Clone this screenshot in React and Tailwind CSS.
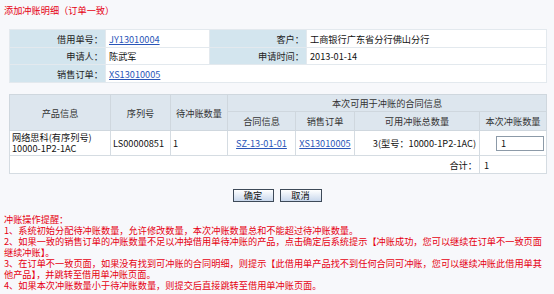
import React from "react";

const link = "text-[#2a56b8] underline";

export default function App() {
  const lb = "bg-[#d3e5ee] text-right pr-[2px] border border-[#e3e9ee] text-[#222]";
  const vl = "bg-white pl-[3px] border border-[#e3e9ee] text-[#111]";
  const th = "bg-[#dde6ee] text-center border border-[#cfd7de] text-[#333] font-normal";
  const td = "bg-white border border-[#d5dce2] text-[#111]";
  return (
    <div className="w-[554px] h-[294px] overflow-hidden bg-[#f7f8fb] font-['Noto_Sans_CJK_SC',sans-serif] text-[9.2px] leading-[12px]">
      <div className="pt-[4px] pl-[4px] text-[#e60012] leading-[13px]">添加冲账明细（订单一致）</div>

      <table className="ml-[9px] mt-[12px] w-[537px] border-collapse table-fixed">
        <colgroup>
          <col className="w-[96px]" />
          <col className="w-[104px]" />
          <col className="w-[97px]" />
          <col className="w-[240px]" />
        </colgroup>
        <tbody>
          <tr className="h-[18px]">
            <td className={lb}>借用单号：</td>
            <td className={vl}><span className={link}>JY13010004</span></td>
            <td className={lb}>客户：</td>
            <td className={vl}>工商银行广东省分行佛山分行</td>
          </tr>
          <tr className="h-[17px]">
            <td className={lb}>申请人：</td>
            <td className={vl}>陈武军</td>
            <td className={lb}>申请时间：</td>
            <td className={vl}>2013-01-14</td>
          </tr>
          <tr className="h-[18px]">
            <td className={lb}>销售订单：</td>
            <td className={vl} colSpan={3}><span className={link}>XS13010005</span></td>
          </tr>
        </tbody>
      </table>

      <table className="ml-[9px] mt-[11px] w-[537px] border-collapse table-fixed">
        <colgroup>
          <col className="w-[101px]" />
          <col className="w-[60px]" />
          <col className="w-[57px]" />
          <col className="w-[68px]" />
          <col className="w-[59px]" />
          <col className="w-[125px]" />
          <col className="w-[67px]" />
        </colgroup>
        <thead>
          <tr className="h-[17px]">
            <th className={th} rowSpan={2}>产品信息</th>
            <th className={th} rowSpan={2}>序列号</th>
            <th className={th} rowSpan={2}>待冲账数量</th>
            <th className={th} colSpan={4}>本次可用于冲账的合同信息</th>
          </tr>
          <tr className="h-[19px]">
            <th className={th}>合同信息</th>
            <th className={th}>销售订单</th>
            <th className={th}>可用冲账总数量</th>
            <th className={th}>本次冲账数量</th>
          </tr>
        </thead>
        <tbody>
          <tr className="h-[25px]">
            <td className={td + " pl-[2px] leading-[11px]"}>
              <div>网络思科(有序列号)</div>
              <div>10000-1P2-1AC</div>
            </td>
            <td className={td + " pl-[2px]"}>LS00000851</td>
            <td className={td + " pl-[2px]"}>1</td>
            <td className={td + " text-center"}><span className={link}>SZ-13-01-01</span></td>
            <td className={td + " text-center"}><span className={link}>XS13010005</span></td>
            <td className={td + " text-right pr-[3px]"}>3(型号：10000-1P2-1AC)</td>
            <td className={td}>
              <div className="flex justify-end pr-[2px]">
                <div className="w-[48px] h-[15px] bg-white border border-[#8c9aa8] pl-[4px] leading-[13px]">1</div>
              </div>
            </td>
          </tr>
          <tr className="h-[18px]">
            <td className={td + " text-right pr-[2px] border-r-[#d5dce2]"} colSpan={6}>合计：</td>
            <td className={td + " pl-[4px]"}>1</td>
          </tr>
        </tbody>
      </table>

      <div className="mt-[15px] flex justify-center gap-[6px]">
        <button className="w-[41px] h-[13px] border border-[#3e4a58] bg-gradient-to-b from-white to-[#c9d8ec] text-[#111] leading-[11px] text-[9.2px]">确定</button>
        <button className="w-[42px] h-[13px] border border-[#3e4a58] bg-gradient-to-b from-white to-[#c9d8ec] text-[#111] leading-[11px] text-[9.2px]">取消</button>
      </div>

      <div className="mt-[12px] pl-[4px] text-[#e60012] leading-[11px] whitespace-nowrap">
        <div>冲账操作提醒：</div>
        <div>1、系统初始分配待冲账数量，允许修改数量，本次冲账数量总和不能超过待冲账数量。</div>
        <div>2、如果一致的销售订单的冲账数量不足以冲掉借用单待冲账的产品，点击确定后系统提示【冲账成功，您可以继续在订单不一致页面</div>
        <div>继续冲账】。</div>
        <div>3、在订单不一致页面，如果没有找到可冲账的合同明细，则提示【此借用单产品找不到任何合同可冲账，您可以继续冲账此借用单其</div>
        <div>他产品】，并跳转至借用单冲账页面。</div>
        <div>4、如果本次冲账数量小于待冲账数量，则提交后直接跳转至借用单冲账页面。</div>
      </div>
    </div>
  );
}
